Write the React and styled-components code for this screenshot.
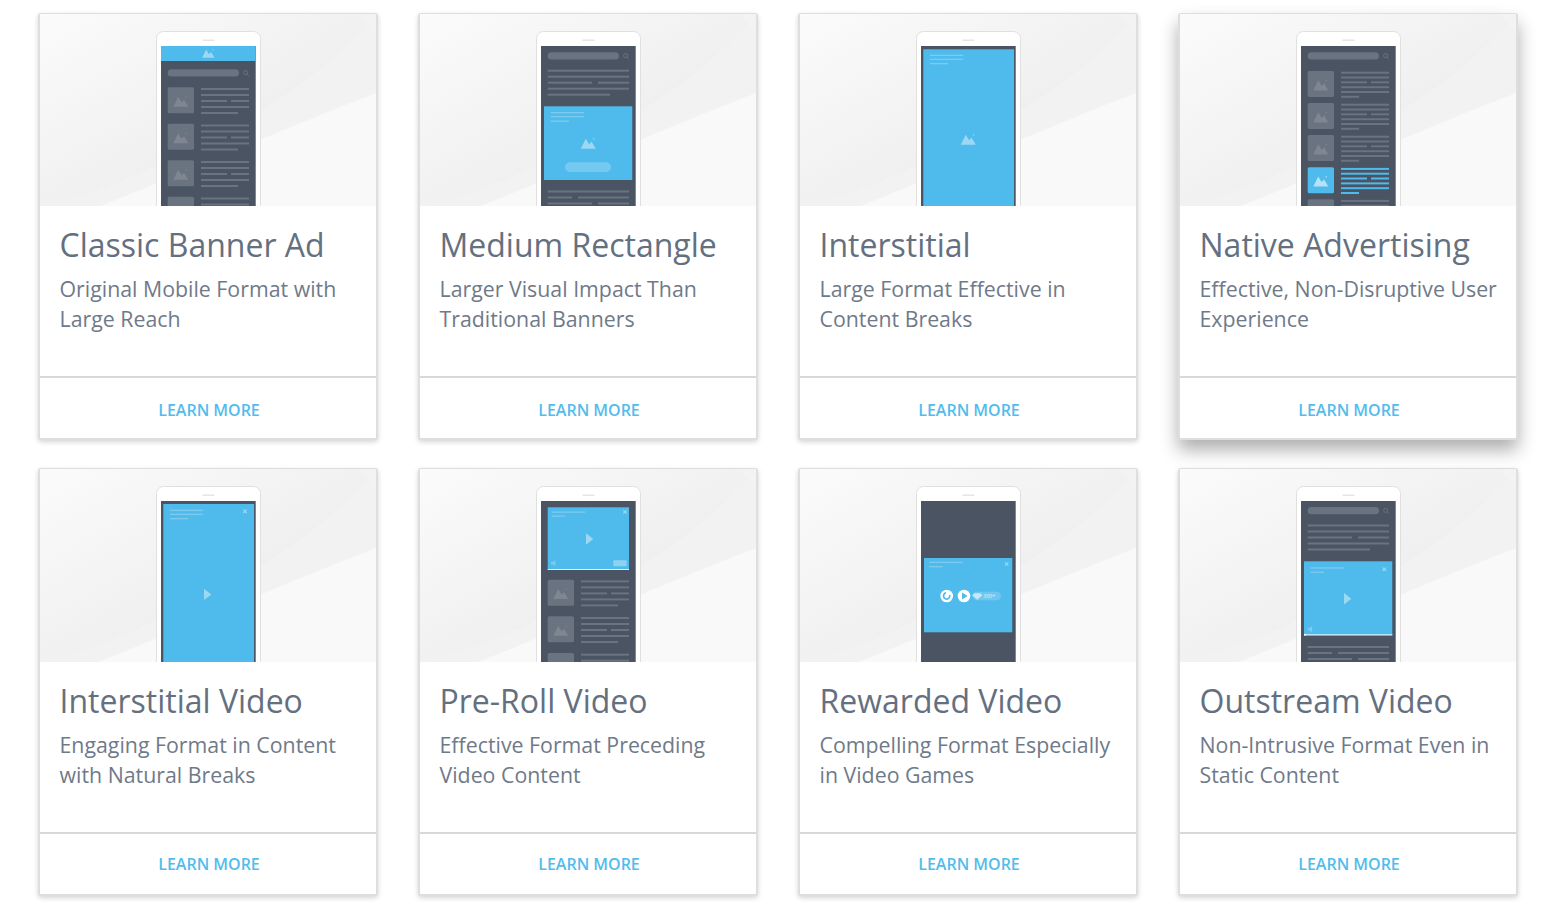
import React from 'react';
import styled, { createGlobalStyle } from 'styled-components';

const GlobalStyle = createGlobalStyle`
  html, body { margin: 0; padding: 0; background: #fff; }
  body { font-family: "Open Sans", "Liberation Sans", sans-serif; }
`;

const Page = styled.div`
  width: 1548px;
  height: 912px;
  box-sizing: border-box;
  padding: 13px 30px 0 38px;
  overflow: hidden;
`;

const Grid = styled.div`
  display: grid;
  grid-template-columns: repeat(4, 340px);
  column-gap: 40px;
  row-gap: 28px;
`;

const Card = styled.div`
  display: flex;
  flex-direction: column;
  box-sizing: border-box;
  background: #fff;
  border: 2px solid #dedede;
  border-top-width: 1px;
  border-radius: 3px;
  box-shadow: ${(p) =>
    p.$raised
      ? '0 10px 18px rgba(0, 0, 0, 0.32)'
      : '0 2px 5px rgba(0, 0, 0, 0.17)'};
`;

const Art = styled.div`
  height: ${(p) => p.$height}px;
  overflow: hidden;
  background: #f3f3f3;

  svg { display: block; }
`;

const Body = styled.div`
  height: 170px;
  box-sizing: border-box;
  padding: 19px 15px 0 19.5px;
`;

const Title = styled.h2`
  margin: 0;
  font-size: 32px;
  line-height: 40px;
  font-weight: 400;
  color: #647080;
  white-space: nowrap;
`;

const Desc = styled.p`
  margin: 9px 0 0;
  font-size: 21.33px;
  line-height: 30px;
  font-weight: 400;
  color: #6f7a89;
`;

const Footer = styled.div`
  height: 62px;
  box-sizing: border-box;
  border-top: 2px solid #d8d8d8;
  display: flex;
  justify-content: center;
  padding-left: 2px;
  padding-top: ${(p) => p.$top}px;
`;

const LearnMore = styled.a`
  font-size: 16px;
  line-height: 22px;
  font-weight: 600;
  color: #52bcec;
  cursor: pointer;
`;

const DARK = '#4a5462';
const BAR = '#6a7380';
const PEAK = '#7f8692';
const BLUE = '#4fbbec';
const TINT = '#9dd8f3';
const SOFT = '#7ccbf0';

const Mountain = ({ x, y, w, fill = PEAK }) => {
  const h = w * 0.72;
  return (
    <g transform={`translate(${x - w / 2} ${y - h / 2}) scale(${w})`} fill={fill}>
      <path d="M0 .72 L.33 .05 L.55 .42 L.72 .25 L1 .72 Z" />
      <circle cx=".86" cy=".07" r=".05" />
    </g>
  );
};

const Bar = ({ x1, x2, y, h = 2, fill = BAR }) => (
  <rect x={x1} y={y} width={x2 - x1} height={h} fill={fill} />
);

const Search = ({ y }) => (
  <g>
    <rect x="6.7" y={y} width="71.3" height="7.3" rx="3.6" fill={BAR} />
    <circle cx="84.6" cy={y + 3.3} r="2" fill="none" stroke={BAR} strokeWidth="1" />
    <path d={`M86 ${y + 4.8} l1.8 1.8`} stroke={BAR} strokeWidth="1" />
  </g>
);

const TextBlock = ({ y }) => (
  <g>
    <Bar x1={6.7} x2={88} y={y} />
    <Bar x1={6.7} x2={88} y={y + 6} />
    <Bar x1={6.7} x2={51} y={y + 12} />
    <Bar x1={57} x2={88} y={y + 12} />
    <Bar x1={6.7} x2={88} y={y + 18} />
    <Bar x1={6.7} x2={69} y={y + 24} />
  </g>
);

const ListRow = ({ y }) => (
  <g>
    <rect x="6.7" y={y} width="26.3" height="26" rx="1.5" fill={BAR} />
    <Mountain x={19.8} y={y + 14} w={15} />
    <Bar x1={40} x2={88} y={y + 0.7} />
    <Bar x1={40} x2={88} y={y + 6.7} />
    <Bar x1={40} x2={66} y={y + 12.7} />
    <Bar x1={70} x2={88} y={y + 12.7} />
    <Bar x1={40} x2={88} y={y + 18.7} />
    <Bar x1={40} x2={77} y={y + 24.7} />
  </g>
);

const NativeRow = ({ y, active }) => {
  const line = active ? BLUE : BAR;
  return (
    <g>
      <rect x="6.7" y={y} width="26.3" height="26" rx="1.5" fill={active ? BLUE : BAR} />
      <Mountain x={19.8} y={y + 14} w={15} fill={active ? '#b5e2f7' : PEAK} />
      <Bar x1={40} x2={88} y={y + 0.7} fill={line} />
      <Bar x1={40} x2={88} y={y + 5.5} fill={line} />
      <Bar x1={40} x2={66} y={y + 10.3} fill={line} />
      <Bar x1={70} x2={88} y={y + 10.3} fill={line} />
      <Bar x1={40} x2={88} y={y + 15.2} fill={line} />
      <Bar x1={40} x2={88} y={y + 20} fill={line} />
      <Bar x1={40} x2={58} y={y + 24.8} fill={line} />
    </g>
  );
};

const Close = ({ x, y }) => (
  <path
    d={`M${x - 1.7} ${y - 1.7} L${x + 1.7} ${y + 1.7} M${x + 1.7} ${y - 1.7} L${x - 1.7} ${y + 1.7}`}
    stroke={TINT}
    strokeWidth="1.1"
  />
);

const Play = ({ x, y }) => (
  <path d={`M${x} ${y} L${x + 7.3} ${y + 5.7} L${x} ${y + 11.4} Z`} fill={TINT} />
);

const Speaker = ({ x, y }) => (
  <path
    d={`M${x - 3} ${y - 1.2} h1.8 l2.6 -2 v6.4 l-2.6 -2 h-1.8 Z`}
    fill={SOFT}
  />
);

const ClassicScreen = () => (
  <g>
    <rect x="0" y="0" width="94.7" height="15" fill={BLUE} />
    <Mountain x={47.3} y={7.4} w={12.4} fill={TINT} />
    <Search y={23.3} />
    <ListRow y={41.3} />
    <ListRow y={77.8} />
    <ListRow y={114.3} />
    <ListRow y={150.8} />
  </g>
);

const RectangleScreen = () => (
  <g>
    <Search y={6.3} />
    <TextBlock y={23.7} />
    <rect x="3" y="60.3" width="88.3" height="73.7" fill={BLUE} />
    <Bar x1={9.7} x2={43} y={66} h={1.3} fill={SOFT} />
    <Bar x1={9.7} x2={43} y={70} h={1.3} fill={SOFT} />
    <Bar x1={9.7} x2={28} y={74.5} h={1.3} fill={SOFT} />
    <Mountain x={47.3} y={97.3} w={15} fill={TINT} />
    <rect x="24" y="116.3" width="46" height="9.7" rx="4.8" fill="#74c9f0" />
    <Bar x1={6.7} x2={88} y={144.5} />
    <Bar x1={6.7} x2={31} y={150.5} />
    <Bar x1={37} x2={88} y={150.5} />
    <Bar x1={6.7} x2={51} y={156.5} />
    <Bar x1={57} x2={88} y={156.5} />
  </g>
);

const InterstitialScreen = () => (
  <g>
    <rect x="2.3" y="3.3" width="90.7" height="160" fill={BLUE} />
    <Bar x1={9} x2={42.3} y={8.7} h={1.3} fill={SOFT} />
    <Bar x1={9} x2={42.3} y={12.7} h={1.3} fill={SOFT} />
    <Bar x1={9} x2={27.3} y={17} h={1.3} fill={SOFT} />
    <Mountain x={47.3} y={93.3} w={15} fill={TINT} />
  </g>
);

const NativeScreen = () => (
  <g>
    <Search y={6.3} />
    <NativeRow y={25} />
    <NativeRow y={57} />
    <NativeRow y={89} />
    <NativeRow y={121.2} active />
    <NativeRow y={153.2} />
  </g>
);

const InterstitialVideoScreen = () => (
  <g>
    <rect x="2.3" y="3" width="90.7" height="160" fill={BLUE} />
    <Bar x1={9} x2={42.3} y={8.7} h={1.3} fill={SOFT} />
    <Bar x1={9} x2={42.3} y={12.7} h={1.3} fill={SOFT} />
    <Bar x1={9} x2={27.3} y={17} h={1.3} fill={SOFT} />
    <Close x={84} y={10.3} />
    <Play x={43} y={87.7} />
  </g>
);

const PreRollScreen = () => (
  <g>
    <rect x="6.7" y="6.3" width="81.3" height="62.7" fill={BLUE} />
    <rect x="6.7" y="68" width="81.3" height="1" fill="#e4f4fc" />
    <Bar x1={10.7} x2={44} y={10.5} h={1.3} fill={SOFT} />
    <Bar x1={10.7} x2={24} y={14.5} h={1.3} fill={SOFT} />
    <Close x={84} y={11} />
    <Play x={45} y={32.3} />
    <Speaker x={13} y={62.3} />
    <rect x="72.3" y="59.3" width="13.4" height="6" rx="1" fill="#8ed2f2" />
    <ListRow y={78.7} />
    <ListRow y={115.3} />
    <ListRow y={152} />
  </g>
);

const RewardedScreen = () => (
  <g>
    <rect x="3" y="57" width="88.3" height="74.3" fill={BLUE} />
    <Bar x1={8.3} x2={41.7} y={60.7} h={1.3} fill={SOFT} />
    <Bar x1={8.3} x2={21.7} y={65} h={1.3} fill={SOFT} />
    <Close x={85.7} y={63} />
    <circle cx="25.7" cy="95" r="6.3" fill="#fff" />
    <path d="M28.6 94 A3.1 3.1 0 1 1 25 91.9" fill="none" stroke={BLUE} strokeWidth="1.7" />
    <circle cx="43" cy="95" r="6.3" fill="#fff" />
    <path d="M41 91.4 L46.6 95 L41 98.6 Z" fill={BLUE} />
    <rect x="51.7" y="90.7" width="28.3" height="8.6" rx="4.3" fill="#6fc7ef" />
    <path d="M53.2 92.2 h6.2 l2 2 -5.1 4.6 -5.1 -4.6 Z" fill="#c4e8f8" />
    <text x="62.6" y="96.8" fontSize="5" fontFamily="Open Sans, sans-serif" fill="#e3f4fc">
      300+
    </text>
  </g>
);

const OutstreamScreen = () => (
  <g>
    <Search y={6} />
    <TextBlock y={23.5} />
    <rect x="3" y="60.3" width="88.3" height="74.3" fill={BLUE} />
    <Bar x1={9.7} x2={43} y={66.3} h={1.3} fill={SOFT} />
    <Bar x1={9.7} x2={23} y={70.6} h={1.3} fill={SOFT} />
    <Close x={83.3} y={68.3} />
    <Play x={43} y={92} />
    <Speaker x={9.7} y={128.3} />
    <rect x="3" y="133" width="88.3" height="1.4" fill="#b9e3f6" />
    <rect x="3" y="133" width="2" height="1.4" fill="#fff" />
    <Bar x1={6.7} x2={88} y={145} />
    <Bar x1={6.7} x2={31} y={151} />
    <Bar x1={37} x2={88} y={151} />
    <Bar x1={6.7} x2={51} y={157} />
    <Bar x1={57} x2={88} y={157} />
  </g>
);

const PhoneArt = ({ id, children }) => (
  <svg width="336" height="193" viewBox="0 0 336 193">
    <defs>
      <linearGradient id={`bg-${id}`} x1="0" y1="0" x2="1" y2="1">
        <stop offset="0" stopColor="#fbfbfb" />
        <stop offset="0.6" stopColor="#efefef" />
        <stop offset="1" stopColor="#ececec" />
      </linearGradient>
      <clipPath id={`screen-${id}`}>
        <rect x="121" y="32" width="94.7" height="162" />
      </clipPath>
    </defs>
    <rect width="336" height="193" fill={`url(#bg-${id})`} />
    <path d="M336 0 C290 55 230 95 170 125 C110 155 60 180 0 193 L336 193 Z" fill="#f2f2f2" />
    <path d="M336 0 L320 0 L336 18 Z" fill="#f3f3f3" />
    <path d="M58 193 C130 165 230 120 336 79 L336 193 Z" fill="#f9f9f9" />
    <rect x="116.5" y="17.5" width="104" height="190" rx="7" fill="#fff" stroke="#e0e0e0" />
    <rect x="162.3" y="25.5" width="12.4" height="1.6" rx="0.8" fill="#e6e6e6" />
    <rect x="121" y="32" width="94.7" height="162" fill={DARK} />
    <g clipPath={`url(#screen-${id})`}>
      <g transform="translate(121 32)">{children}</g>
    </g>
  </svg>
);

const formats = [
  { title: 'Classic Banner Ad', desc: 'Original Mobile Format with Large Reach', screen: <ClassicScreen /> },
  { title: 'Medium Rectangle', desc: 'Larger Visual Impact Than Traditional Banners', screen: <RectangleScreen /> },
  { title: 'Interstitial', desc: 'Large Format Effective in Content Breaks', screen: <InterstitialScreen /> },
  { title: 'Native Advertising', desc: 'Effective, Non-Disruptive User Experience', screen: <NativeScreen />, raised: true },
  { title: 'Interstitial Video', desc: 'Engaging Format in Content with Natural Breaks', screen: <InterstitialVideoScreen /> },
  { title: 'Pre-Roll Video', desc: 'Effective Format Preceding Video Content', screen: <PreRollScreen /> },
  { title: 'Rewarded Video', desc: 'Compelling Format Especially in Video Games', screen: <RewardedScreen /> },
  { title: 'Outstream Video', desc: 'Non-Intrusive Format Even in Static Content', screen: <OutstreamScreen /> },
];

const App = () => (
  <Page>
    <GlobalStyle />
    <Grid>
      {formats.map((f, i) => (
        <Card key={f.title} $raised={f.raised}>
          <Art $height={i < 4 ? 192 : 193}>
            <PhoneArt id={i}>{f.screen}</PhoneArt>
          </Art>
          <Body>
            <Title>{f.title}</Title>
            <Desc>{f.desc}</Desc>
          </Body>
          <Footer $top={i < 4 ? 21 : 19}>
            <LearnMore>LEARN MORE</LearnMore>
          </Footer>
        </Card>
      ))}
    </Grid>
  </Page>
);

export default App;
